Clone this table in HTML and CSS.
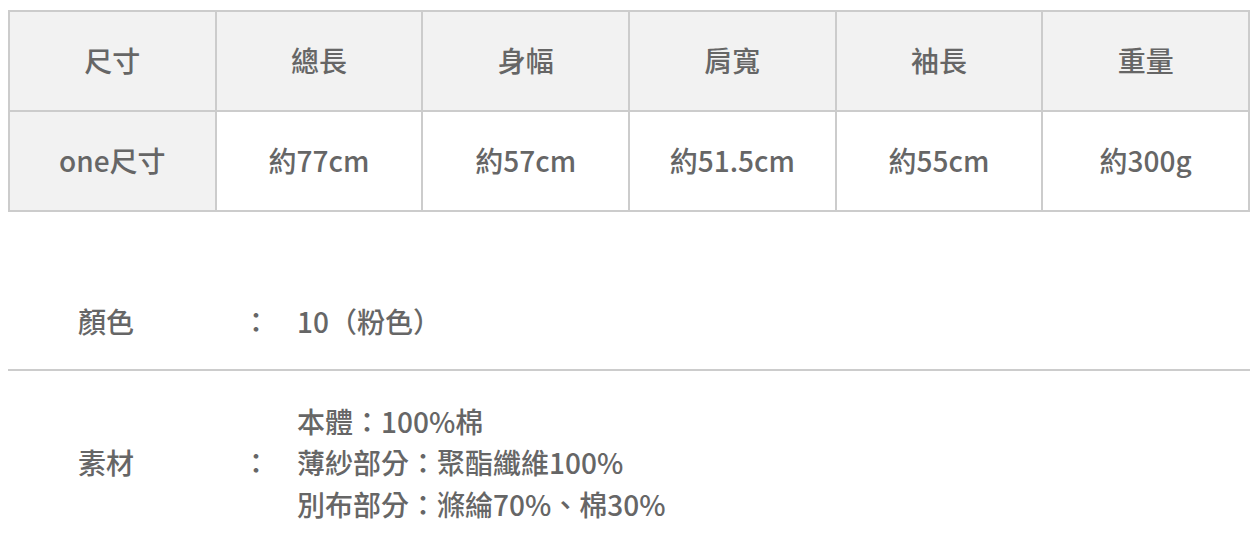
FILE: index.html
```html
<!DOCTYPE html>
<html lang="zh-Hant">
<head>
<meta charset="utf-8">
<link rel="stylesheet" href="styles.css">
</head>
<body>
<table class="size-table">
  <thead>
    <tr>
      <th>尺寸</th>
      <th>總長</th>
      <th>身幅</th>
      <th>肩寬</th>
      <th>袖長</th>
      <th>重量</th>
    </tr>
  </thead>
  <tbody>
    <tr>
      <th>one尺寸</th>
      <td>約77cm</td>
      <td>約57cm</td>
      <td>約51.5cm</td>
      <td>約55cm</td>
      <td>約300g</td>
    </tr>
  </tbody>
</table>

<dl class="spec">
  <div class="spec-row">
    <dt>顏色</dt>
    <dd class="colon">：</dd>
    <dd class="value">10（粉色）</dd>
  </div>
  <div class="spec-row">
    <dt>素材</dt>
    <dd class="colon">：</dd>
    <dd class="value">本體：100%棉<br>薄紗部分：聚酯纖維100%<br>別布部分：滌綸70%、棉30%</dd>
  </div>
</dl>
</body>
</html>
```

FILE: styles.css
```css
* { box-sizing: border-box; }

body {
  margin: 8px;
  font-family: "Noto Sans CJK TC", "Noto Sans", sans-serif;
  color: #666;
  font-weight: 500;
  background: #fff;
}

.size-table {
  width: 1242px;
  margin-top: 2px;
  border-collapse: collapse;
  table-layout: fixed;
  font-size: 28px;
}

.size-table th,
.size-table td {
  border: 2px solid #cccccc;
  height: 100px;
  padding: 0 0 3px;
  text-align: center;
  vertical-align: middle;
  font-weight: 500;
  color: #666;
}

.size-table thead th,
.size-table tbody th {
  background: #f2f2f2;
}

.size-table td {
  background: #fff;
}

.spec {
  margin: 61px 0 0;
  padding: 0;
  font-size: 28px;
  line-height: 41.5px;
}

.spec-row {
  display: grid;
  grid-template-columns: 164px 55px 1fr;
  align-items: center;
  padding: 28px 0 26px 70px;
}

.spec-row + .spec-row {
  border-top: 2px solid #cccccc;
  padding-top: 30px;
}

.spec dt,
.spec dd {
  margin: 0;
}
```
